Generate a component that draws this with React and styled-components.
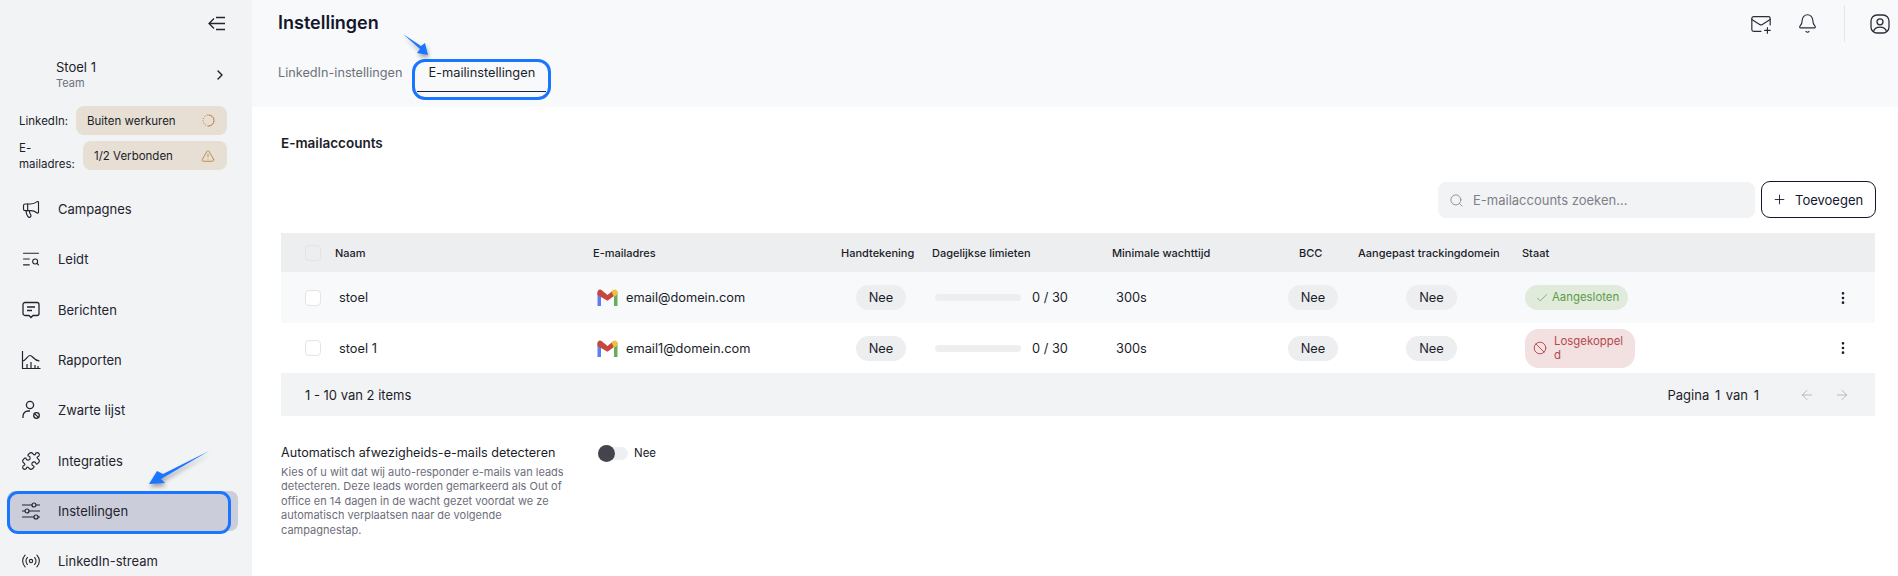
import React from "react"
import styled, { createGlobalStyle } from "styled-components"
import {
  AlertTriangle,
  ArrowLeft,
  ArrowRight,
  Ban,
  Bell,
  Check,
  EllipsisVertical,
  MailPlus,
  Megaphone,
  Plus,
  Puzzle,
  Radio,
  Search,
  TextSearch,
  ChevronRight,
} from "lucide-react"

const GlobalStyle = createGlobalStyle`
  * { box-sizing: border-box; }
  html, body { margin: 0; height: 576px; overflow: hidden; background: #fff; }
  body { font-family: Inter, "Noto Sans", sans-serif; color: #1b1d2a; }
`

const Page = styled.div`
  position: relative;
  display: flex;
  width: 1898px;
  height: 576px;
  overflow: hidden;
`

const Sidebar = styled.aside`
  width: 252px;
  flex: none;
  background: #f2f3f5;
  display: flex;
  flex-direction: column;
`

const CollapseRow = styled.div`
  height: 47px;
  padding: 14px 25px 0 0;
  display: flex;
  justify-content: flex-end;
  color: #22242f;
`

const SeatRow = styled.div`
  display: flex;
  align-items: center;
  justify-content: space-between;
  margin-top: 18px;
  padding: 7px 24px 0 56px;
  height: 43px;
`

const SeatName = styled.div`
  font-size: 13px;
  line-height: 17px;
`

const SeatTeam = styled.div`
  font-size: 11px;
  line-height: 15px;
  color: #6d7078;
`

const StatusRow = styled.div`
  display: flex;
  align-items: center;
  justify-content: space-between;
  padding: 0 25px 0 19px;
  height: 29px;
  margin-top: ${(p) => p.$top}px;
`

const StatusLabel = styled.span`
  font-size: 11.5px;
  line-height: 16px;
  width: ${(p) => p.$width}px;
`

const StatusBadge = styled.div`
  flex: 1;
  height: 29px;
  border-radius: 8px;
  background: #e7dfd4;
  display: flex;
  align-items: center;
  justify-content: space-between;
  padding: 0 12px 0 11px;
  font-size: 11.5px;
  color: #b07a2e;
  span { color: #1b1d2a; }
`

const Nav = styled.nav`
  margin-top: 14px;
  display: flex;
  flex-direction: column;
`

const NavItem = styled.div`
  position: relative;
  height: 50.3px;
  display: flex;
  align-items: center;
  gap: 17px;
  padding: ${(p) => (p.$active ? "1px" : "0")} 0 0 21px;
  font-size: 13px;
  color: #22242f;
`

const NavLabel = styled.span`
  position: relative;
`

const NavIcon = styled.span`
  position: relative;
  display: flex;
`

const NavHighlight = styled.span`
  position: absolute;
  left: 7px;
  width: 231px;
  top: 5px;
  height: 40px;
  border-radius: 8px;
  background: #cbcdda;
`

const NavOutline = styled.span`
  position: absolute;
  left: 7px;
  width: 224px;
  top: 5px;
  height: 43px;
  border: 3px solid #1a75ff;
  border-radius: 11px;
`

const Main = styled.main`
  flex: 1;
  min-width: 0;
  display: flex;
  flex-direction: column;
`

const Header = styled.header`
  height: 107px;
  flex: none;
  background: #f8f9fb;
  padding: 0 7px 0 26px;
`

const TopRow = styled.div`
  display: flex;
  align-items: flex-start;
  justify-content: space-between;
  height: 59px;
`

const Title = styled.h1`
  margin: 12px 0 0;
  font-size: 18px;
  line-height: 22px;
  font-weight: 600;
  color: #14162b;
`

const TopActions = styled.div`
  display: flex;
  align-items: center;
  color: #2b2d38;
  padding-top: 5px;
`

const TopIcon = styled.span`
  display: flex;
  margin-right: ${(p) => p.$gap}px;
`

const Divider = styled.span`
  width: 1px;
  height: 37px;
  background: #e4e5e8;
  margin-right: 24px;
`

const Tabs = styled.div`
  display: flex;
  align-items: flex-start;
`

const Tab = styled.div`
  font-size: 12.7px;
  line-height: 16px;
  padding-top: 6px;
  color: #6d7078;
`

const ActiveTab = styled.div`
  position: relative;
  width: 139px;
  height: 41px;
  margin-left: 10px;
  padding: 3px 0 0 13px;
  border: 3px solid #1a75ff;
  border-radius: 13px;
  font-size: 12.8px;
  line-height: 16px;
  color: #1b1d2a;
`

const TabLine = styled.span`
  position: absolute;
  left: 2px;
  right: 2px;
  bottom: 5px;
  height: 1px;
  background: #1d2145;
`

const Content = styled.section`
  flex: 1;
  padding: 28px 23px 0 29px;
`

const SectionTitle = styled.h2`
  margin: 0;
  font-size: 13.5px;
  line-height: 17px;
  font-weight: 600;
`

const Toolbar = styled.div`
  display: flex;
  justify-content: flex-end;
  gap: 6px;
  margin: 29px -1px 0 0;
  height: 37px;
`

const SearchBox = styled.div`
  width: 317px;
  height: 36px;
  margin-top: 1px;
  border-radius: 8px;
  background: #f2f3f5;
  display: flex;
  align-items: center;
  gap: 9px;
  padding: 0 11px;
  font-size: 13px;
  color: #7d8088;
`

const AddButton = styled.button`
  width: 115px;
  height: 37px;
  border: 1px solid #14162b;
  border-radius: 9px;
  background: #fff;
  display: flex;
  align-items: center;
  gap: 8px;
  padding: 0 0 0 10px;
  font: 400 13px Inter, sans-serif;
  color: #14162b;
`

const Table = styled.div`
  margin-top: 15px;
  width: 1594px;
`

const tracks = "54px 258px 248px 91px 180px 166px 80px 164px 278px 75px"

const HeadRow = styled.div`
  display: grid;
  grid-template-columns: ${tracks};
  height: 39px;
  align-items: center;
  background: #edeef0;
  font-size: 11px;
  font-weight: 500;
`

const Row = styled.div`
  display: grid;
  grid-template-columns: ${tracks};
  height: ${(p) => p.$height}px;
  align-items: center;
  background: ${(p) => p.$bg};
  font-size: 12.8px;
`

const Cell = styled.div`
  display: flex;
  align-items: center;
  min-width: 0;
  white-space: nowrap;
  padding-left: ${(p) => p.$pad || 0}px;
`

const CheckBox = styled.span`
  width: 16px;
  height: 16px;
  margin-left: 24px;
  border: 1px solid #e3e4e7;
  border-radius: 4px;
  background: ${(p) => p.$fill || "transparent"};
`

const Pill = styled.span`
  display: inline-flex;
  align-items: center;
  justify-content: center;
  width: ${(p) => p.$width}px;
  height: 25px;
  border-radius: 13px;
  background: #edeef0;
`

const Bar = styled.span`
  width: 86px;
  height: 7px;
  border-radius: 4px;
  background: #edeef0;
  margin-right: 11px;
`

const StateBadge = styled.div`
  display: flex;
  align-items: center;
  gap: ${(p) => (p.$bad ? 7 : 3)}px;
  width: ${(p) => p.$width}px;
  min-height: 25px;
  padding: ${(p) => (p.$bad ? "5px 10px 5px 8px" : "0 0 0 10px")};
  margin-left: 3px;
  border-radius: 14px;
  font-size: 11.4px;
  line-height: 14.5px;
  white-space: normal;
  color: ${(p) => (p.$bad ? "#b3494f" : "#5d9c45")};
  background: ${(p) => (p.$bad ? "#f3e0e1" : "#e0ebdc")};
  word-break: break-all;
`

const Dots = styled.div`
  display: flex;
  justify-content: flex-end;
  padding-right: 24px;
  color: #1b1d2a;
`

const Footer = styled.div`
  height: 43px;
  background: #f2f3f5;
  display: flex;
  align-items: center;
  justify-content: space-between;
  padding: 0 25px 0 24px;
  font-size: 13px;
`

const Pager = styled.div`
  display: flex;
  align-items: center;
  color: #1b1d2a;
  svg { color: #a9abb2; }
`

const PagerText = styled.span`
  margin-right: 40px;
  word-spacing: 2px;
`

const Option = styled.div`
  display: flex;
  margin-top: 29px;
`

const OptionText = styled.div`
  width: 317px;
`

const OptionTitle = styled.div`
  font-size: 12.6px;
  line-height: 16px;
`

const OptionDesc = styled.p`
  margin: 4px 0 0;
  width: 295px;
  font-size: 11px;
  line-height: 14.4px;
  color: #6d6e7a;
`

const Toggle = styled.div`
  display: flex;
  align-items: center;
  height: 16px;
  font-size: 11.5px;
`

const Track = styled.span`
  position: relative;
  width: 30px;
  height: 13px;
  margin-right: 6px;
  border-radius: 7px;
  background: #eeeff1;
`

const Knob = styled.span`
  position: absolute;
  left: 0;
  top: -2px;
  width: 17px;
  height: 17px;
  border-radius: 50%;
  background: #44444f;
`

const Annotations = styled.svg`
  position: absolute;
  inset: 0;
  pointer-events: none;
  filter: drop-shadow(1px 3px 2px rgba(0, 0, 0, 0.35));
`

const CollapseIcon = () => (
  <svg width="20" height="20" viewBox="0 0 20 20" fill="none" stroke="currentColor" strokeWidth="1.3">
    <path d="M7 4.500 2 9.500l5 5M2 9.500h16M9 3.500h9M9 15.500h9" />
  </svg>
)

const MessageIcon = () => (
  <svg width="20" height="20" viewBox="0 0 20 20" fill="none" stroke="currentColor" strokeWidth="1.3">
    <path d="M4 2.500h12a2 2 0 0 1 2 2v9a2 2 0 0 1-2 2h-4l-2 2-2-2H4a2 2 0 0 1-2-2v-9a2 2 0 0 1 2-2Z" />
    <path d="M6 7h8M6 10.500h5" />
  </svg>
)

const ChartIcon = () => (
  <svg width="20" height="20" viewBox="0 0 20 20" fill="none" stroke="currentColor" strokeWidth="1.2">
    <path d="M1.500 1v17.500h18M1.500 11C5 11 6 5.500 9 5.500s3.500 5 9.500 5.500M6 18v-4M10 18v-6M14 18v-3M17 18v-2" />
  </svg>
)

const BlockedUserIcon = () => (
  <svg width="20" height="20" viewBox="0 0 20 20" fill="none" stroke="currentColor" strokeWidth="1.3">
    <circle cx="9" cy="5" r="3.600" />
    <path d="M2 18v-2a5 5 0 0 1 5-5h2" />
    <circle cx="15.500" cy="15.500" r="2.800" />
    <path d="m13.600 13.600 3.800 3.800" />
  </svg>
)

const SlidersIcon = () => (
  <svg width="20" height="20" viewBox="0 0 20 20" fill="none" stroke="currentColor" strokeWidth="1.2">
    <path d="M1 4h10M15 4h4M1 10h3M8 10h11M1 16h12M17 16h2" />
    <circle cx="13" cy="4" r="2" />
    <circle cx="6" cy="10" r="2" />
    <circle cx="15" cy="16" r="2" />
  </svg>
)

const SpinnerIcon = () => (
  <svg width="13" height="13" viewBox="0 0 13 13" fill="none" stroke="currentColor" strokeWidth="1">
    <path d="M6.500 1a5.500 5.500 0 0 1 0 11" />
    <path d="M6.500 12A5.500 5.500 0 0 1 6.500 1" strokeDasharray="1 1.500" />
  </svg>
)

const GmailIcon = () => (
  <svg width="21" height="17" viewBox="0 0 20 17" style={{ marginRight: 8, marginLeft: 4 }}>
    <path d="M0 3v14h3.500V5Z" fill="#5f7ff0" />
    <path d="M20 3v14h-3.500V5Z" fill="#69ad5c" />
    <path d="M0 3a2.500 2.500 0 0 1 4-2l6 5 6-5 4 2-3.500 4-6.500 4.800L0 6Z" fill="#c8473c" />
    <path d="M16 1a2.500 2.500 0 0 1 4 2v2.500l-3.500 2.200L14 2.600Z" fill="#eec13f" />
  </svg>
)

const UserSquareIcon = () => (
  <svg width="22" height="22" viewBox="0 0 22 22" fill="none" stroke="currentColor" strokeWidth="1.3">
    <rect x="2" y="2" width="18" height="18" rx="6" />
    <circle cx="11" cy="8.800" r="3" />
    <path d="M4.500 18.500c.8-3 3.400-4.300 6.500-4.300s5.700 1.300 6.500 4.300" />
  </svg>
)

const navItems = [
  { label: "Campagnes", icon: <Megaphone size={20} strokeWidth={1.4} /> },
  { label: "Leidt", icon: <TextSearch size={20} strokeWidth={1.3} /> },
  { label: "Berichten", icon: <MessageIcon /> },
  { label: "Rapporten", icon: <ChartIcon /> },
  { label: "Zwarte lijst", icon: <BlockedUserIcon /> },
  { label: "Integraties", icon: <Puzzle size={20} strokeWidth={1.4} /> },
  { label: "Instellingen", icon: <SlidersIcon />, active: true },
  { label: "LinkedIn-stream", icon: <Radio size={20} strokeWidth={1.3} /> },
]

const accounts = [
  { name: "stoel", email: "email@domein.com", bg: "#f8f9fb", height: 51, ok: true },
  { name: "stoel 1", email: "email1@domein.com", bg: "#fff", height: 50, ok: false },
]

const App = () => {
  return (
    <Page>
      <GlobalStyle />
      <Sidebar>
        <CollapseRow>
          <CollapseIcon />
        </CollapseRow>
        <SeatRow>
          <div>
            <SeatName>Stoel 1</SeatName>
            <SeatTeam>Team</SeatTeam>
          </div>
          <ChevronRight size={16} />
        </SeatRow>
        <StatusRow $top={15}>
          <StatusLabel $width={57}>LinkedIn:</StatusLabel>
          <StatusBadge>
            <span>Buiten werkuren</span>
            <SpinnerIcon />
          </StatusBadge>
        </StatusRow>
        <StatusRow $top={6}>
          <StatusLabel $width={64}>E-mailadres:</StatusLabel>
          <StatusBadge>
            <span>1/2 Verbonden</span>
            <AlertTriangle size={14} strokeWidth={1.4} />
          </StatusBadge>
        </StatusRow>
        <Nav>
          {navItems.map((item) => (
            <NavItem key={item.label} $active={item.active}>
              {item.active && <NavHighlight />}
              {item.active && <NavOutline />}
              <NavIcon>{item.icon}</NavIcon>
              <NavLabel>{item.label}</NavLabel>
            </NavItem>
          ))}
        </Nav>
      </Sidebar>

      <Main>
        <Header>
          <TopRow>
            <Title>Instellingen</Title>
            <TopActions>
              <TopIcon $gap={25}>
                <MailPlus size={22} strokeWidth={1.3} />
              </TopIcon>
              <TopIcon $gap={26}>
                <Bell size={21} strokeWidth={1.3} />
              </TopIcon>
              <Divider />
              <UserSquareIcon />
            </TopActions>
          </TopRow>
          <Tabs>
            <Tab>LinkedIn-instellingen</Tab>
            <ActiveTab>
              E-mailinstellingen
              <TabLine />
            </ActiveTab>
          </Tabs>
        </Header>

        <Content>
          <SectionTitle>E-mailaccounts</SectionTitle>
          <Toolbar>
            <SearchBox>
              <Search size={15} strokeWidth={1.3} />
              E-mailaccounts zoeken...
            </SearchBox>
            <AddButton>
              <Plus size={15} strokeWidth={1.4} />
              Toevoegen
            </AddButton>
          </Toolbar>

          <Table>
            <HeadRow>
              <Cell>
                <CheckBox />
              </Cell>
              <Cell>Naam</Cell>
              <Cell>E-mailadres</Cell>
              <Cell>Handtekening</Cell>
              <Cell>Dagelijkse limieten</Cell>
              <Cell>Minimale wachttijd</Cell>
              <Cell $pad={21}>BCC</Cell>
              <Cell>Aangepast trackingdomein</Cell>
              <Cell>Staat</Cell>
              <Cell />
            </HeadRow>
            {accounts.map((account) => (
              <Row key={account.name} $bg={account.bg} $height={account.height}>
                <Cell>
                  <CheckBox $fill="#fff" />
                </Cell>
                <Cell $pad={4}>{account.name}</Cell>
                <Cell>
                  <GmailIcon />
                  {account.email}
                </Cell>
                <Cell $pad={15}>
                  <Pill $width={50}>Nee</Pill>
                </Cell>
                <Cell $pad={3}>
                  <Bar />0 / 30
                </Cell>
                <Cell $pad={4}>300s</Cell>
                <Cell $pad={10}>
                  <Pill $width={50}>Nee</Pill>
                </Cell>
                <Cell $pad={48}>
                  <Pill $width={51}>Nee</Pill>
                </Cell>
                <Cell>
                  {account.ok ? (
                    <StateBadge $width={103}>
                      <Check size={14} strokeWidth={1.2} />
                      Aangesloten
                    </StateBadge>
                  ) : (
                    <StateBadge $bad $width={110}>
                      <Ban size={14} strokeWidth={1.6} style={{ flex: "none" }} />
                      Losgekoppeld
                    </StateBadge>
                  )}
                </Cell>
                <Dots>
                  <EllipsisVertical size={16} />
                </Dots>
              </Row>
            ))}
            <Footer>
              <span>1 - 10 van 2 items</span>
              <Pager>
                <PagerText>Pagina 1 van 1</PagerText>
                <ArrowLeft size={16} strokeWidth={1.2} style={{ marginRight: 19 }} />
                <ArrowRight size={16} strokeWidth={1.2} />
              </Pager>
            </Footer>
          </Table>

          <Option>
            <OptionText>
              <OptionTitle>Automatisch afwezigheids-e-mails detecteren</OptionTitle>
              <OptionDesc>
                Kies of u wilt dat wij auto-responder e-mails van leads detecteren. Deze leads
                worden gemarkeerd als Out of office en 14 dagen in de wacht gezet voordat we ze
                automatisch verplaatsen naar de volgende campagnestap.
              </OptionDesc>
            </OptionText>
            <Toggle>
              <Track>
                <Knob />
              </Track>
              Nee
            </Toggle>
          </Option>
        </Content>
      </Main>

      <Annotations width="1898" height="576" viewBox="0 0 1898 576">
        <path d="M209 451 163 474l-6-3-8 13 16-1-4-4Z" fill="#1a75ff" />
        <path d="M403 34 421 46l4-3 3 12-11-2 3-4Z" fill="#1a75ff" />
      </Annotations>
    </Page>
  )
}

export default App
